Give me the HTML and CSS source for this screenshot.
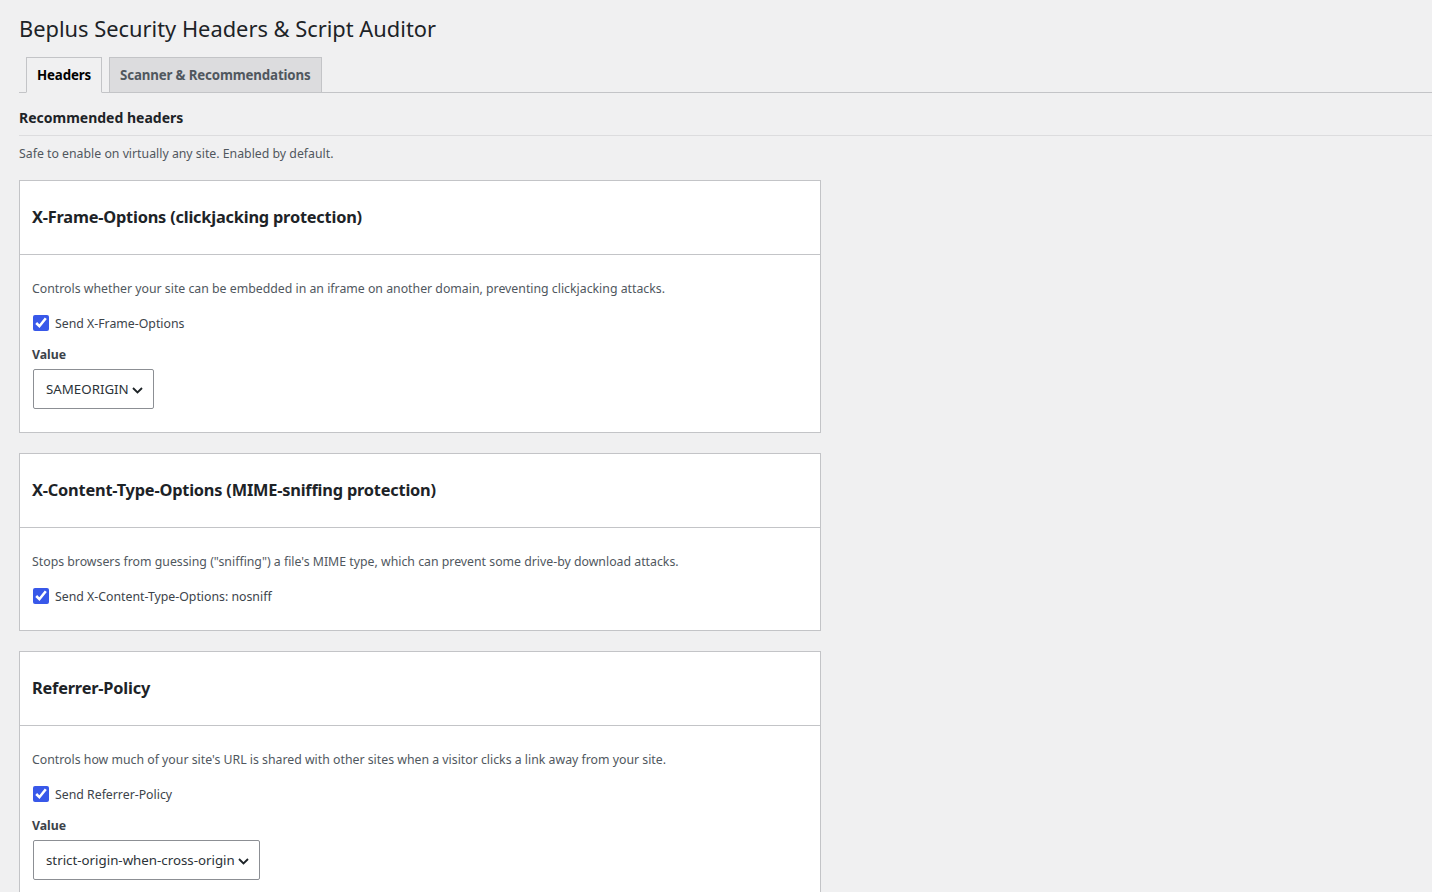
FILE: index.html
```html
<!DOCTYPE html>
<html lang="en">
<head>
    <meta charset="UTF-8">
    <meta name="viewport" content="width=device-width, initial-scale=1.0">
    <title>Beplus Security Headers &amp; Script Auditor</title>
    <link rel="stylesheet" href="styles.css">
</head>
<body>
    <div class="wrap">
        <h1>Beplus Security Headers &amp; Script Auditor</h1>

        <nav class="nav-tabs">
            <a href="#" class="nav-tab nav-tab-active">Headers</a>
            <a href="#" class="nav-tab">Scanner &amp; Recommendations</a>
        </nav>

        <h2 class="section-title">Recommended headers</h2>
        <p class="section-intro">Safe to enable on virtually any site. Enabled by default.</p>

        <div class="card">
            <div class="card-head">
                <h3>X-Frame-Options (clickjacking protection)</h3>
            </div>
            <div class="card-body">
                <p class="desc">Controls whether your site can be embedded in an iframe on another domain, preventing clickjacking attacks.</p>
                <label class="check"><input type="checkbox" checked> Send X-Frame-Options</label>
                <div class="field-label">Value</div>
                <span class="select-wrap">
                    <select>
                        <option selected>SAMEORIGIN</option>
                        <option>DENY</option>
                    </select>
                    <svg class="chevron" width="11" height="7" viewBox="0 0 11 7"><path d="M1 1l4.5 4.5L10 1" fill="none" stroke="#1d2327" stroke-width="1.8"/></svg>
                </span>
            </div>
        </div>

        <div class="card">
            <div class="card-head">
                <h3>X-Content-Type-Options (MIME-sniffing protection)</h3>
            </div>
            <div class="card-body">
                <p class="desc">Stops browsers from guessing ("sniffing") a file's MIME type, which can prevent some drive-by download attacks.</p>
                <label class="check"><input type="checkbox" checked> Send X-Content-Type-Options: nosniff</label>
            </div>
        </div>

        <div class="card">
            <div class="card-head">
                <h3>Referrer-Policy</h3>
            </div>
            <div class="card-body">
                <p class="desc">Controls how much of your site's URL is shared with other sites when a visitor clicks a link away from your site.</p>
                <label class="check"><input type="checkbox" checked> Send Referrer-Policy</label>
                <div class="field-label">Value</div>
                <span class="select-wrap">
                    <select>
                        <option selected>strict-origin-when-cross-origin</option>
                        <option>no-referrer</option>
                        <option>same-origin</option>
                        <option>strict-origin</option>
                    </select>
                    <svg class="chevron" width="11" height="7" viewBox="0 0 11 7"><path d="M1 1l4.5 4.5L10 1" fill="none" stroke="#1d2327" stroke-width="1.8"/></svg>
                </span>
            </div>
        </div>
    </div>
</body>
</html>
```
FILE: styles.css
```css
body {
    margin: 0;
    background: #f0f0f1;
    color: #3c434a;
    font-family: "Noto Sans", sans-serif;
    font-size: 12.3px;
}
.wrap {
    padding: 5px 0 0 19px;
}
h1 {
    margin: 0;
    padding: 9px 0 4px;
    font-size: 21.85px;
    font-weight: 400;
    line-height: 30px;
    color: #1d2327;
}

/* tabs */
.nav-tabs {
    display: flex;
    align-items: flex-end;
    padding-top: 9px;
    border-bottom: 1px solid #c3c4c7;
}
.nav-tab {
    margin-left: 7px;
    padding: 5px 10px;
    border: 1px solid #c3c4c7;
    border-bottom: none;
    background: #dcdcde;
    color: #50575e;
    font-size: 13.3px;
    font-weight: 700;
    letter-spacing: -0.15px;
    line-height: 24px;
    text-decoration: none;
    white-space: nowrap;
}
.nav-tab-active {
    margin-bottom: -1px;
    border-bottom: 1px solid #f0f0f1;
    background: #f0f0f1;
    color: #000;
}

.section-title {
    margin: 15px 0 0;
    padding-bottom: 7px;
    border-bottom: 1px solid #dcdcde;
    font-size: 14px;
    font-weight: 700;
    line-height: 20px;
    color: #1d2327;
}
.section-intro {
    margin: 9px 0 17px;
    line-height: 18px;
    color: #50575e;
}

/* header cards */
.card {
    box-sizing: border-box;
    width: 802px;
    margin-bottom: 20px;
    border: 1px solid #c3c4c7;
    background: #fff;
}
.card-head {
    padding: 25px 12px;
    border-bottom: 1px solid #c3c4c7;
}
.card-head h3 {
    margin: 0;
    font-size: 16.35px;
    font-weight: 700;
    letter-spacing: -0.2px;
    line-height: 23px;
    color: #1d2327;
}
.card-body {
    display: flex;
    flex-direction: column;
    align-items: flex-start;
    padding: 0 12px 23px;
}
.desc {
    margin: 25px 0 0;
    line-height: 18px;
    color: #50575e;
}
.check {
    display: flex;
    align-items: center;
    gap: 6px;
    height: 22px;
    margin-top: 14px;
    color: #3c434a;
}
.check input {
    width: 16px;
    height: 16px;
    margin: 0 0 0 1px;
    accent-color: #3858e9;
}
.field-label {
    margin-top: 12px;
    font-weight: 700;
    line-height: 18px;
    color: #3c434a;
}
.select-wrap {
    position: relative;
    display: inline-block;
    margin: 5px 1px 0;
}
.select-wrap select {
    -webkit-appearance: none;
    appearance: none;
    box-sizing: border-box;
    display: block;
    height: 40px;
    padding: 0 24px 0 12px;
    border: 1px solid #8c8f94;
    border-radius: 2px;
    background: #fff;
    color: #2c3338;
    font-family: inherit;
    font-size: 13.3px;
}
.chevron {
    position: absolute;
    right: 11px;
    top: 18px;
    pointer-events: none;
}
```
